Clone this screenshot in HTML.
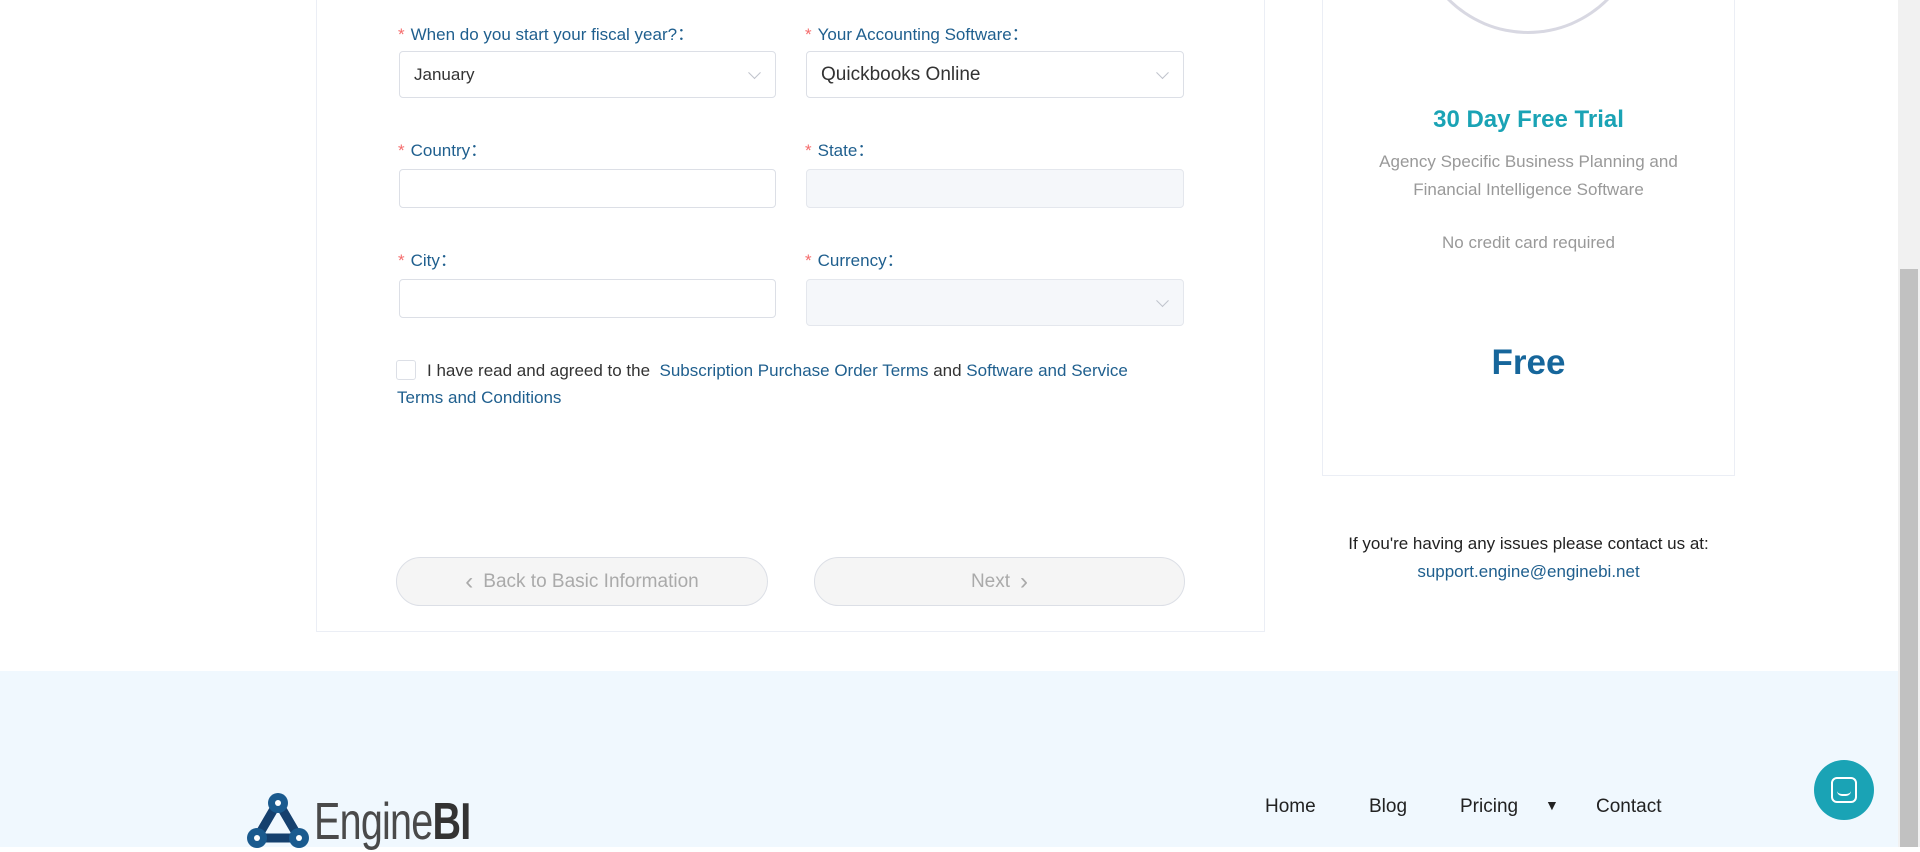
<!DOCTYPE html>
<html><head><meta charset="utf-8"><style>
*{box-sizing:border-box;margin:0;padding:0}
body{width:1920px;height:847px;overflow:hidden;background:#fff;font-family:"Liberation Sans",sans-serif;position:relative}
.a{position:absolute}
.panel{left:316px;top:-5px;width:949px;height:637px;border:1px solid #ebeef5;border-top:none}
.lbl{font-size:17px;color:#1f5f8e;white-space:nowrap}
.lbl b{color:#f56c6c;font-weight:normal;margin-right:6px}
.inp{border:1px solid #dcdfe6;border-radius:4px;background:#fff;font-size:17px;color:#333;padding-left:14px;display:flex;align-items:center}
.dis{background:#f5f7fa;border-color:#e4e7ed}
.chev{position:absolute;right:16px;top:50%;width:9px;height:9px;border-right:1.5px solid #c0c4cc;border-bottom:1.5px solid #c0c4cc;transform:translateY(-75%) rotate(45deg)}
.btn{border:1px solid #dcdfe6;background:#f5f5f5;border-radius:25px;color:#aaa;font-size:19px;display:flex;align-items:center;justify-content:center;gap:10px}
.card{left:1322px;top:-5px;width:413px;height:481px;border:1px solid #ebeef5;border-top:none;text-align:center}
a{color:#1f5f8e;text-decoration:none}
.nav{font-size:19px;color:#222;top:796px}
</style></head><body>
<div class="a panel"></div>
<div class="a lbl" style="left:398px;top:20px"><b>*</b>When do you start your fiscal year?：</div>
<div class="a lbl" style="left:805px;top:20px"><b>*</b>Your Accounting Software：</div>
<div class="a inp" style="left:399px;top:51px;width:377px;height:47px">January<span class="chev"></span></div>
<div class="a inp" style="left:806px;top:51px;width:378px;height:47px;font-size:19px">Quickbooks Online<span class="chev"></span></div>
<div class="a lbl" style="left:398px;top:136px"><b>*</b>Country：</div>
<div class="a lbl" style="left:805px;top:136px"><b>*</b>State：</div>
<div class="a inp" style="left:399px;top:169px;width:377px;height:39px"></div>
<div class="a inp dis" style="left:806px;top:169px;width:378px;height:39px"></div>
<div class="a lbl" style="left:398px;top:246px"><b>*</b>City：</div>
<div class="a lbl" style="left:805px;top:246px"><b>*</b>Currency：</div>
<div class="a inp" style="left:399px;top:279px;width:377px;height:39px"></div>
<div class="a inp dis" style="left:806px;top:279px;width:378px;height:47px"><span class="chev"></span></div>
<div class="a" style="left:396px;top:360px;width:20px;height:20px;border:1px solid #dcdfe6;border-radius:3px"></div>
<div class="a" style="left:397px;top:357px;width:780px;font-size:17px;line-height:27px;color:#333;text-indent:30px">I have read and agreed to the &nbsp;<a>Subscription Purchase Order Terms</a> and <a>Software and Service Terms and Conditions</a></div>
<div class="a btn" style="left:396px;top:557px;width:372px;height:49px"><span style="font-size:24px">‹</span>Back to Basic Information</div>
<div class="a btn" style="left:814px;top:557px;width:371px;height:49px">Next<span style="font-size:24px">›</span></div>
<div class="a card"></div>
<div class="a" style="left:1413px;top:-200px;width:230px;height:234px;border-radius:50%;border:3px solid #d8d8e2;border-top:none"></div>
<div class="a" style="left:1322px;top:106px;width:413px;text-align:center;font-size:24px;font-weight:bold;color:#1aa3b5">30 Day Free Trial</div>
<div class="a" style="left:1322px;top:148px;width:413px;text-align:center;font-size:17px;line-height:28px;color:#999">Agency Specific Business Planning and<br>Financial Intelligence Software</div>
<div class="a" style="left:1322px;top:233px;width:413px;text-align:center;font-size:17px;color:#999">No credit card required</div>
<div class="a" style="left:1322px;top:343px;width:413px;text-align:center;font-size:35px;font-weight:bold;color:#16669b">Free</div>
<div class="a" style="left:1300px;top:530px;width:457px;text-align:center;font-size:17px;line-height:28px;color:#222">If you're having any issues please contact us at:<br><a>support.engine@enginebi.net</a></div>
<div class="a" style="left:0;top:671px;width:1898px;height:176px;background:#f0f8fe"></div>
<svg class="a" style="left:247px;top:792px" width="62" height="56" viewBox="0 0 62 56"><path d="M31 10 L10 46 L52 46 Z" fill="none" stroke="#15406e" stroke-width="9"/><circle cx="31" cy="11" r="10" fill="#1a5a8e"/><circle cx="10" cy="46" r="10" fill="#1a5a8e"/><circle cx="52" cy="46" r="10" fill="#1a5a8e"/><circle cx="31" cy="11" r="3" fill="#fff"/><circle cx="10" cy="46" r="3" fill="#fff"/><circle cx="52" cy="46" r="3" fill="#fff"/></svg>
<div class="a" style="left:314px;top:792px;font-size:52px;color:#4a4a4a;letter-spacing:-1px;transform:scaleX(0.76);transform-origin:left top;white-space:nowrap">Engine<b style="color:#333">BI</b></div>
<div class="a nav" style="left:1265px">Home</div>
<div class="a nav" style="left:1369px">Blog</div>
<div class="a nav" style="left:1460px">Pricing</div>
<div class="a nav" style="left:1545px;font-size:14px;top:797px">▼</div>
<div class="a nav" style="left:1596px">Contact</div>
<div class="a" style="left:1814px;top:760px;width:60px;height:60px;border-radius:50%;background:#1aa3b5"></div>
<div class="a" style="left:1831px;top:777px;width:26px;height:26px;border:2.5px solid #fff;border-radius:6px"></div>
<div class="a" style="left:1837px;top:791px;width:14px;height:5px;border-bottom:2.5px solid #fff;border-radius:0 0 7px 7px"></div>
<div class="a" style="left:1898px;top:0;width:22px;height:847px;background:#f1f1f1"></div>
<div class="a" style="left:1900px;top:269px;width:18px;height:578px;background:#c1c1c1"></div>
</body></html>
